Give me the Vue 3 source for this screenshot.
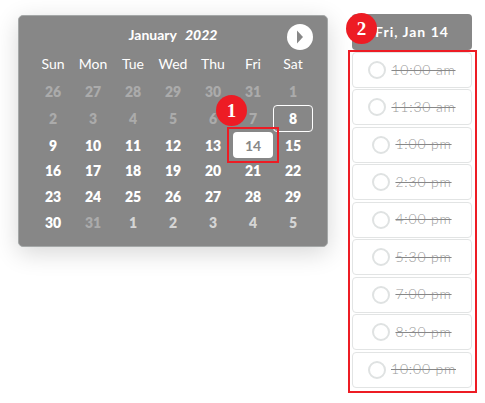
<script setup>
import { ref, computed } from 'vue';

const weekdays = ['Sun', 'Mon', 'Tue', 'Wed', 'Thu', 'Fri', 'Sat'];
const today = 8;
const selected = ref(14);

// 6 weeks, starting on Dec 26
const days = computed(() => {
  const list = [];
  for (let i = 0; i < 42; i++) {
    const date = new Date(2021, 11, 26 + i);
    const inMonth = date.getMonth() === 0;
    const num = date.getDate();
    list.push({
      id: i,
      num,
      inMonth,
      next: date.getMonth() === 1,
      disabled: date.getMonth() === 11 || (inMonth && (num < today || num === 31)),
    });
  }
  return list;
});

const slots = ['10:00 am', '11:30 am', '1:00 pm', '2:30 pm', '4:00 pm', '5:30 pm', '7:00 pm', '8:30 pm', '10:00 pm'];

function selectDay(day) {
  if (day.inMonth && !day.disabled) selected.value = day.num;
}
</script>

<template>
  <div class="booking">
    <div class="calendar">
      <div class="month">
        <span class="month-name">January</span>
        <span class="year">2022</span>
        <svg class="next-btn" viewBox="0 0 26 26">
          <circle cx="13" cy="13" r="13" fill="#fff" />
          <path d="M10 6.5 L16 13 L10 19.5 Z" fill="#878787" />
        </svg>
      </div>
      <div class="weekdays">
        <span v-for="name in weekdays" :key="name">{{ name }}</span>
      </div>
      <div class="days">
        <div
          v-for="day in days"
          :key="day.id"
          class="day"
          :class="{
            disabled: day.disabled,
            next: day.next,
            today: day.inMonth && day.num === today,
            selected: day.inMonth && day.num === selected
          }"
          @click="selectDay(day)"
        >
          {{ day.num }}
          <template v-if="day.inMonth && day.num === 14">
            <i class="marker"></i>
            <b class="badge badge-day">1</b>
          </template>
        </div>
      </div>
    </div>

    <div class="times">
      <div class="times-title">
        Fri, Jan 14
        <b class="badge badge-times">2</b>
      </div>
      <div class="slots">
        <div v-for="slot in slots" :key="slot" class="slot">
          <i class="radio"></i>
          <span>{{ slot }}</span>
        </div>
        <i class="slots-marker"></i>
      </div>
    </div>
  </div>
</template>

<style>
body {
  background: #fff;
}
</style>

<style scoped>
.booking {
  display: flex;
  align-items: flex-start;
  gap: 24px;
  height: 403px;
  padding: 14px 13px 0 18px;
  box-sizing: border-box;
  overflow: hidden;
  font-family: Lato, sans-serif;
}

/* --- Calendar --- */
.calendar {
  width: 310px;
  height: 232px;
  margin-top: 1px;
  padding: 0 14px;
  box-sizing: border-box;
  background: #878787;
  border: 1px solid #a5a8a8;
  border-radius: 5px;
  box-shadow: 0 6px 24px rgba(0, 0, 0, 0.16);
  color: #fff;
}
.month {
  position: relative;
  display: flex;
  justify-content: center;
  gap: 8px;
  height: 38px;
  line-height: 38px;
  font-size: 14px;
  font-weight: 700;
}
.year {
  font-style: italic;
  font-weight: 900;
}
.next-btn {
  position: absolute;
  top: 8px;
  right: 0;
  width: 26px;
  height: 26px;
}
.weekdays {
  display: grid;
  grid-template-columns: repeat(7, 40px);
  height: 25px;
  line-height: 19px;
  font-size: 14px;
  text-align: center;
}
.days {
  display: grid;
  grid-template-columns: repeat(7, 40px);
  grid-template-rows: 26px 27px 26px 26px 26px 26px;
}
.day {
  position: relative;
  display: flex;
  align-items: center;
  justify-content: center;
  box-sizing: border-box;
  border: 1px solid transparent;
  border-radius: 4px;
  font-size: 14px;
  font-weight: 800;
}
/* text of these weeks sits a little higher in its row */
.day:nth-child(-n + 7),
.day:nth-child(n + 22) {
  padding-bottom: 2px;
}
.disabled {
  color: #ababab;
}
.next {
  color: #d5d5d5;
}
.today {
  border-color: #fff;
}
.selected {
  background: #fff;
  color: #878787;
  font-weight: 700;
}

/* --- Times --- */
.times {
  width: 120px;
}
.times-title {
  position: relative;
  height: 36px;
  line-height: 36px;
  background: #878787;
  border-radius: 4px;
  color: #fff;
  font-size: 14px;
  font-weight: 700;
  letter-spacing: 1px;
  text-align: center;
}
.slots {
  position: relative;
  display: flex;
  flex-direction: column;
  gap: 1.45px;
  padding-top: 2px;
}
.slot {
  display: flex;
  align-items: center;
  justify-content: center;
  gap: 5px;
  height: 36px;
  box-sizing: border-box;
  border: 1px solid #e2e4e4;
  border-radius: 4px;
  color: #999;
  font-size: 14px;
  font-weight: 300;
  letter-spacing: 0.8px;
}
.slot span {
  padding-bottom: 2px;
  text-decoration: line-through #878787 1px;
}
.radio {
  width: 18px;
  height: 18px;
  box-sizing: border-box;
  border: 2px solid #dfe2e2;
  border-radius: 50%;
}

/* --- Step markers --- */
.marker {
  position: absolute;
  inset: -6px -7px;
  border: 2px solid #ed1c24;
}
.slots-marker {
  position: absolute;
  top: 0;
  left: -4px;
  width: 129px;
  height: 343px;
  box-sizing: border-box;
  border: 2px solid #ed1c24;
}
.badge {
  position: absolute;
  width: 31px;
  height: 31px;
  border-radius: 50%;
  background: #ed1c24;
  color: #fff;
  font: 700 19px/32px "Liberation Serif", serif;
  letter-spacing: 0;
  text-align: center;
}
.badge-day {
  top: -38px;
  left: -18px;
}
.badge-times {
  top: -1px;
  left: -6px;
}
</style>
